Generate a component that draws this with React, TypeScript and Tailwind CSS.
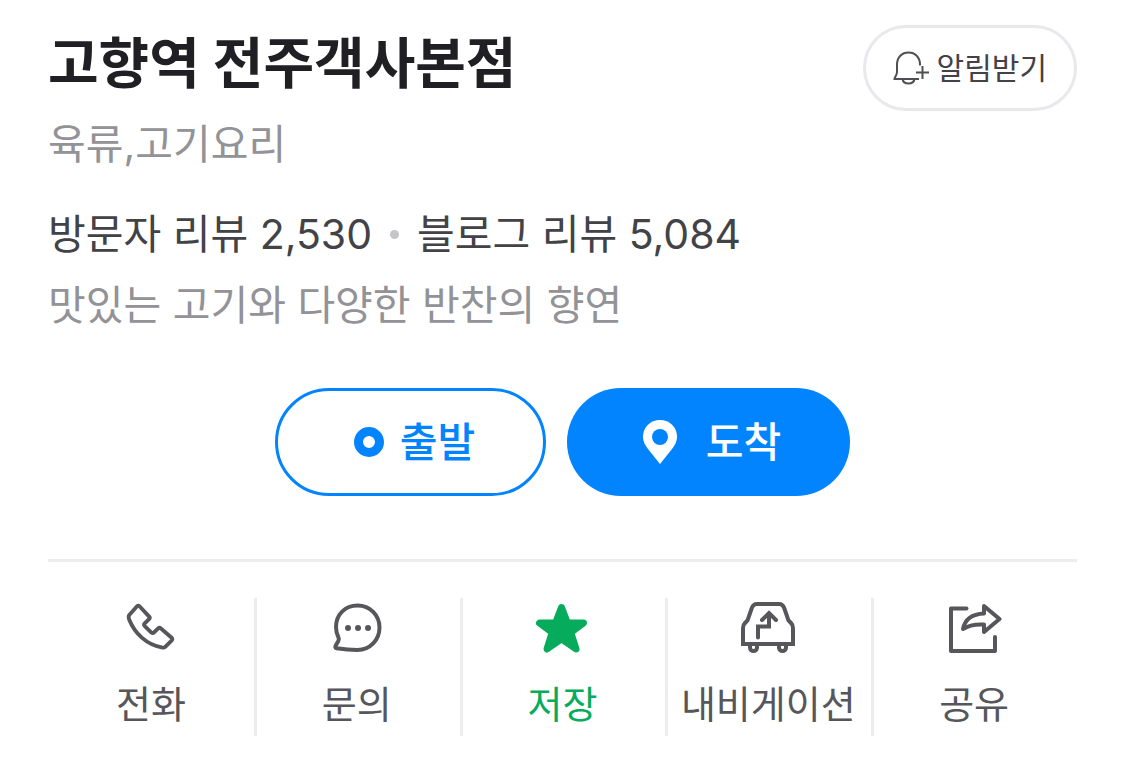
import type { ReactNode } from "react";

function BellPlusIcon() {
  return (
    <svg width="36" height="34" viewBox="0 0 36 34" fill="none" stroke="#4f4f54" strokeWidth="2" aria-hidden="true">
      <path d="M27 14.5v-1C27 6 22 1.500 15.500 1.500S4 6 4 13.500v7.500c0 3-1.500 4-2.500 6.500v.5h24.500" />
      <path d="M9.500 28c.5 3 3 4.500 6 4.500s5.500-1.500 6-4.500" />
      <path d="M29.500 15v13M23 21.500h13" />
    </svg>
  );
}

function PinIcon() {
  return (
    <svg width="36" height="46" viewBox="0 0 36 46" aria-hidden="true">
      <path
        d="M18 1C8.500 1 1 8.300 1 17.500c0 5 2 8.500 5 12.500L18 45l12-15c3-4 5-7.500 5-12.500C35 8.300 27.500 1 18 1Z"
        fill="#fff"
      />
      <circle cx="18" cy="18" r="8" fill="#0384ff" />
    </svg>
  );
}

function PhoneIcon() {
  return (
    <svg width="56" height="56" viewBox="0 0 58 58" fill="none" stroke="#56565b" strokeWidth="4" strokeLinejoin="round" aria-hidden="true">
      <path d="m14.500 6.500-8 9c-1 1.200-.8 3 .2 5.500C12 34 24 46.500 41 49.300c1.500.2 2-.1 3-1.100l6.300-6.200c1.200-1.200 1-2-.2-3.200L39 29.300c-1-.9-1.700-.8-2.600.1l-4.200 4.200c-1 1-1.700 1-2.800.1L22.500 27c-1-1.100-1-1.800 0-2.800l4.500-4.400c1-1 1-1.600.1-2.600l-10-10.700c-.9-.9-1.700-.9-2.600 0Z" />
    </svg>
  );
}

function ChatIcon() {
  return (
    <svg width="56" height="56" viewBox="0 0 56 56" aria-hidden="true">
      <path
        d="M28.500 5.500C16 5.500 7 14.500 7 27c0 4.500 1 7.500 2.500 10.500.7 1.300.4 2.300-.2 3.500L6.500 46c-.5 1.200 0 2 1.200 2.200 3.500.6 12 1.800 20.800 1.800C41 50 50.500 40 50.500 27.500S41 5.500 28.500 5.500Z"
        fill="none"
        stroke="#56565b"
        strokeWidth="4"
        strokeLinejoin="round"
      />
      <circle cx="19" cy="28" r="3" fill="#56565b" />
      <circle cx="29" cy="28" r="3" fill="#56565b" />
      <circle cx="39" cy="28" r="3" fill="#56565b" />
    </svg>
  );
}

function StarIcon() {
  return (
    <svg width="56" height="56" viewBox="0 0 56 56" fill="#06ac5b" stroke="#06ac5b" strokeWidth="7" strokeLinejoin="round" aria-hidden="true">
      <path d="m27.500 7.500 5.900 15.500H49.500L36.800 32.500 42 49 27.500 38.800 13 49l5.200-16.500L5.500 23h16.100Z" />
    </svg>
  );
}

function CarIcon() {
  return (
    <svg width="56" height="56" viewBox="0 0 56 56" fill="none" stroke="#56565b" strokeWidth="4" aria-hidden="true">
      <path d="M3 44V28c0-2.500.5-3.500 2-5l2.500-2.500 4.500-13c1.200-3 2.500-3.500 5-3.500h22c2.500 0 3.800.5 5 3.500l4.500 13L51 23c1.500 1.500 2 2.500 2 5v16Z" />
      <path d="M10 44v3.500a3.500 3.500 0 0 0 7 0V44M39 44v3.500a3.500 3.500 0 0 0 7 0V44" />
      <path d="M18 37.500V26.500h11V13.500M22 20l7-7 7 7" strokeLinecap="round" />
    </svg>
  );
}

function ShareIcon() {
  return (
    <svg width="56" height="56" viewBox="0 0 56 56" fill="none" stroke="#56565b" strokeWidth="4" strokeLinecap="round" strokeLinejoin="round" aria-hidden="true">
      <path d="M20.500 8.500H5v42.500h44V37" />
      <path d="M38 6 53.500 19 38 32v-7.500c-9-.5-15 .5-21 4.500 2-10 9-15 21-15.500Z" />
    </svg>
  );
}

function Action({ icon, label, active }: { icon: ReactNode; label: string; active?: boolean }) {
  return (
    <li className="min-w-0 flex-1 border-l-3 border-[#ededf0] pr-[3px] first:border-transparent">
      <button
        type="button"
        className={`flex w-full flex-col items-center gap-5 pt-0.5 pb-1 whitespace-nowrap text-[38px] leading-[56px] ${
          active ? "text-[#06ac5b]" : "text-[#56565b]"
        }`}
      >
        {icon}
        {label}
      </button>
    </li>
  );
}

export default function App() {
  return (
    <main
      lang="ko"
      className="bg-white px-12 pt-[25px] pb-9 font-['Inter','Noto_Sans_CJK_KR',sans-serif] text-[41px] leading-[56px] text-[#424247]"
    >
      <header className="flex items-start justify-between">
        <div>
          <h1 className="text-[55px] leading-[76px] font-bold text-[#202024]">고향역 전주객사본점</h1>
          <p className="mt-[15px] text-[#929297]">육류,고기요리</p>
        </div>
        <button
          type="button"
          className="flex h-[86px] items-center gap-2 rounded-full border-3 border-[#e8e8ed] px-[27px] text-[30px]"
        >
          <BellPlusIcon />
          알림받기
        </button>
      </header>

      {/* Reviews */}
      <div className="mt-[34px] flex items-center gap-[18px]">
        <a href="#">방문자 리뷰 2,530</a>
        <span className="size-[9px] rounded-full bg-[#c5c5c8]" />
        <a href="#">블로그 리뷰 5,084</a>
      </div>
      <p className="mt-[15px] text-[#929297]">맛있는 고기와 다양한 반찬의 향연</p>

      {/* Directions */}
      <div className="mt-[55px] flex justify-center gap-[21px]">
        <button
          type="button"
          className="flex h-[108px] w-[271px] items-center justify-center gap-4 rounded-full border-3 border-[#0384ff] pl-2 font-medium text-[#0384ff]"
        >
          <span className="size-[30px] rounded-full border-9 border-[#0384ff]" />
          출발
        </button>
        <button
          type="button"
          className="flex h-[108px] w-[283px] items-center justify-center gap-7 rounded-full bg-[#0384ff] pl-1.5 font-medium text-white"
        >
          <PinIcon />
          도착
        </button>
      </div>

      <ul className="mt-[63px] flex border-t-3 border-[#ededf0] pt-9">
        <Action icon={<PhoneIcon />} label="전화" />
        <Action icon={<ChatIcon />} label="문의" />
        <Action icon={<StarIcon />} label="저장" active />
        <Action icon={<CarIcon />} label="내비게이션" />
        <Action icon={<ShareIcon />} label="공유" />
      </ul>
    </main>
  );
}
